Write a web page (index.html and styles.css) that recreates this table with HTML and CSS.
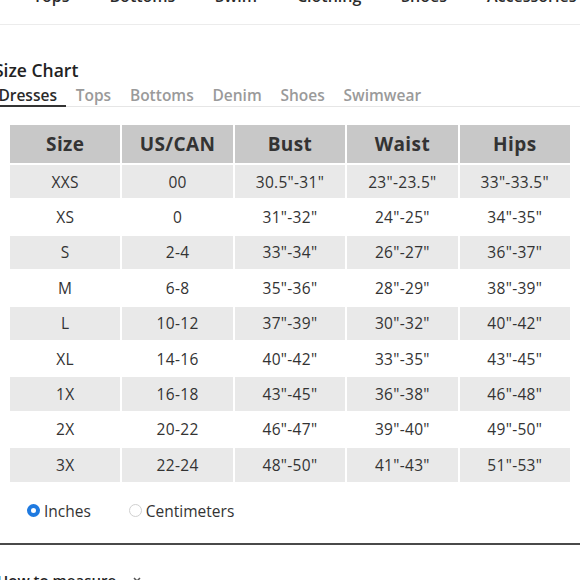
FILE: index.html
```html
<!DOCTYPE html>
<html>
<head>
<meta charset="utf-8">
<link rel="stylesheet" href="styles.css">
</head>
<body>
<nav class="nav">
  <a class="nav-item">Tops</a>
  <a class="nav-item">Bottoms</a>
  <a class="nav-item">Swim</a>
  <a class="nav-item">Clothing</a>
  <a class="nav-item">Shoes</a>
  <a class="nav-item">Accessories</a>
</nav>
<main class="content">
  <h2 class="title">Size Chart</h2>
  <div class="tabs">
    <span class="tab active">Dresses</span>
    <span class="tab">Tops</span>
    <span class="tab">Bottoms</span>
    <span class="tab">Denim</span>
    <span class="tab">Shoes</span>
    <span class="tab">Swimwear</span>
  </div>
  <table class="chart">
    <thead>
      <tr><th>Size</th><th>US/CAN</th><th>Bust</th><th>Waist</th><th>Hips</th></tr>
    </thead>
    <tbody>
      <tr><td>XXS</td><td>00</td><td>30.5"-31"</td><td>23"-23.5"</td><td>33"-33.5"</td></tr>
      <tr><td>XS</td><td>0</td><td>31"-32"</td><td>24"-25"</td><td>34"-35"</td></tr>
      <tr><td>S</td><td>2-4</td><td>33"-34"</td><td>26"-27"</td><td>36"-37"</td></tr>
      <tr><td>M</td><td>6-8</td><td>35"-36"</td><td>28"-29"</td><td>38"-39"</td></tr>
      <tr><td>L</td><td>10-12</td><td>37"-39"</td><td>30"-32"</td><td>40"-42"</td></tr>
      <tr><td>XL</td><td>14-16</td><td>40"-42"</td><td>33"-35"</td><td>43"-45"</td></tr>
      <tr><td>1X</td><td>16-18</td><td>43"-45"</td><td>36"-38"</td><td>46"-48"</td></tr>
      <tr><td>2X</td><td>20-22</td><td>46"-47"</td><td>39"-40"</td><td>49"-50"</td></tr>
      <tr><td>3X</td><td>22-24</td><td>48"-50"</td><td>41"-43"</td><td>51"-53"</td></tr>
    </tbody>
  </table>
  <div class="units">
    <label class="unit"><span class="radio checked"></span>Inches</label>
    <label class="unit"><span class="radio"></span>Centimeters</label>
  </div>
  <div class="measure">
    <span class="measure-label">How to measure</span>
    <svg class="chev" width="10" height="10" viewBox="0 0 10 10"><path d="M2 3l3 3 3-3" fill="none" stroke="#555" stroke-width="1.5"/></svg>
  </div>
</main>
</body>
</html>
```
FILE: styles.css
```css
html, body {
  margin: 0;
  padding: 0;
  background: #fff;
  overflow: hidden;
}
body {
  font-family: "Open Sans", Lato, sans-serif;
  color: #333;
  width: 580px;
  height: 580px;
}
.nav {
  display: flex;
  gap: 40px;
  padding-left: 33px;
  margin-top: -14px;
  height: 38px;
  border-bottom: 1px solid #ececec;
  font-size: 16px;
  font-weight: 600;
  line-height: 20px;
  color: #2b2b2b;
  white-space: nowrap;
  overflow: hidden;
}
.content {
  margin-left: -6px;
  margin-right: -6px;
}
.title {
  margin: 34px 0 0 0;
  font-size: 17.5px;
  font-weight: 600;
  line-height: 22px;
  color: #222;
}
.tabs {
  display: flex;
  margin: 5px 0 0 -5px;
  border-bottom: 1px solid #e6e6e6;
  font-size: 15.5px;
  font-weight: 600;
  line-height: 19px;
  color: #9a9a9a;
}
.tab {
  padding: 0 9.4px;
  border-bottom: 2px solid transparent;
  margin-bottom: -1px;
}
.tab.active {
  color: #2a2a2a;
  border-bottom-color: #333;
}
.chart {
  margin: 16px 0 0 14px;
  width: 564px;
  table-layout: fixed;
  border-collapse: separate;
  border-spacing: 2px;
  text-align: center;
}
.chart th {
  background: #c8c8c8;
  height: 38px;
  padding: 0;
  font-size: 19px;
  font-weight: 700;
  letter-spacing: 0.4px;
  color: #333;
}
.chart td {
  height: 33.4px;
  padding: 0;
  font-size: 15.5px;
  letter-spacing: 0.3px;
  color: #333;
}
.chart tbody tr:nth-child(odd) td {
  background: #e9e9e9;
}
.units {
  display: flex;
  align-items: center;
  gap: 38px;
  margin: 17px 0 0 33px;
  font-size: 15.5px;
  color: #333;
  line-height: 20px;
}
.unit {
  display: flex;
  align-items: center;
  gap: 4px;
}
.radio {
  box-sizing: border-box;
  width: 13px;
  height: 13px;
  border-radius: 50%;
  border: 1px solid #d0d0d0;
  background: #fff;
}
.radio.checked {
  border: 4px solid #1f7ae0;
  background: #fff;
}
.measure {
  margin-top: 22px;
  border-top: 2px solid #4a4a4a;
  padding-top: 25px;
  display: flex;
  align-items: center;
  gap: 16px;
  font-size: 15px;
  font-weight: 600;
  line-height: 20px;
  color: #222;
}
.measure-label {
  padding-left: 3px;
}
```
